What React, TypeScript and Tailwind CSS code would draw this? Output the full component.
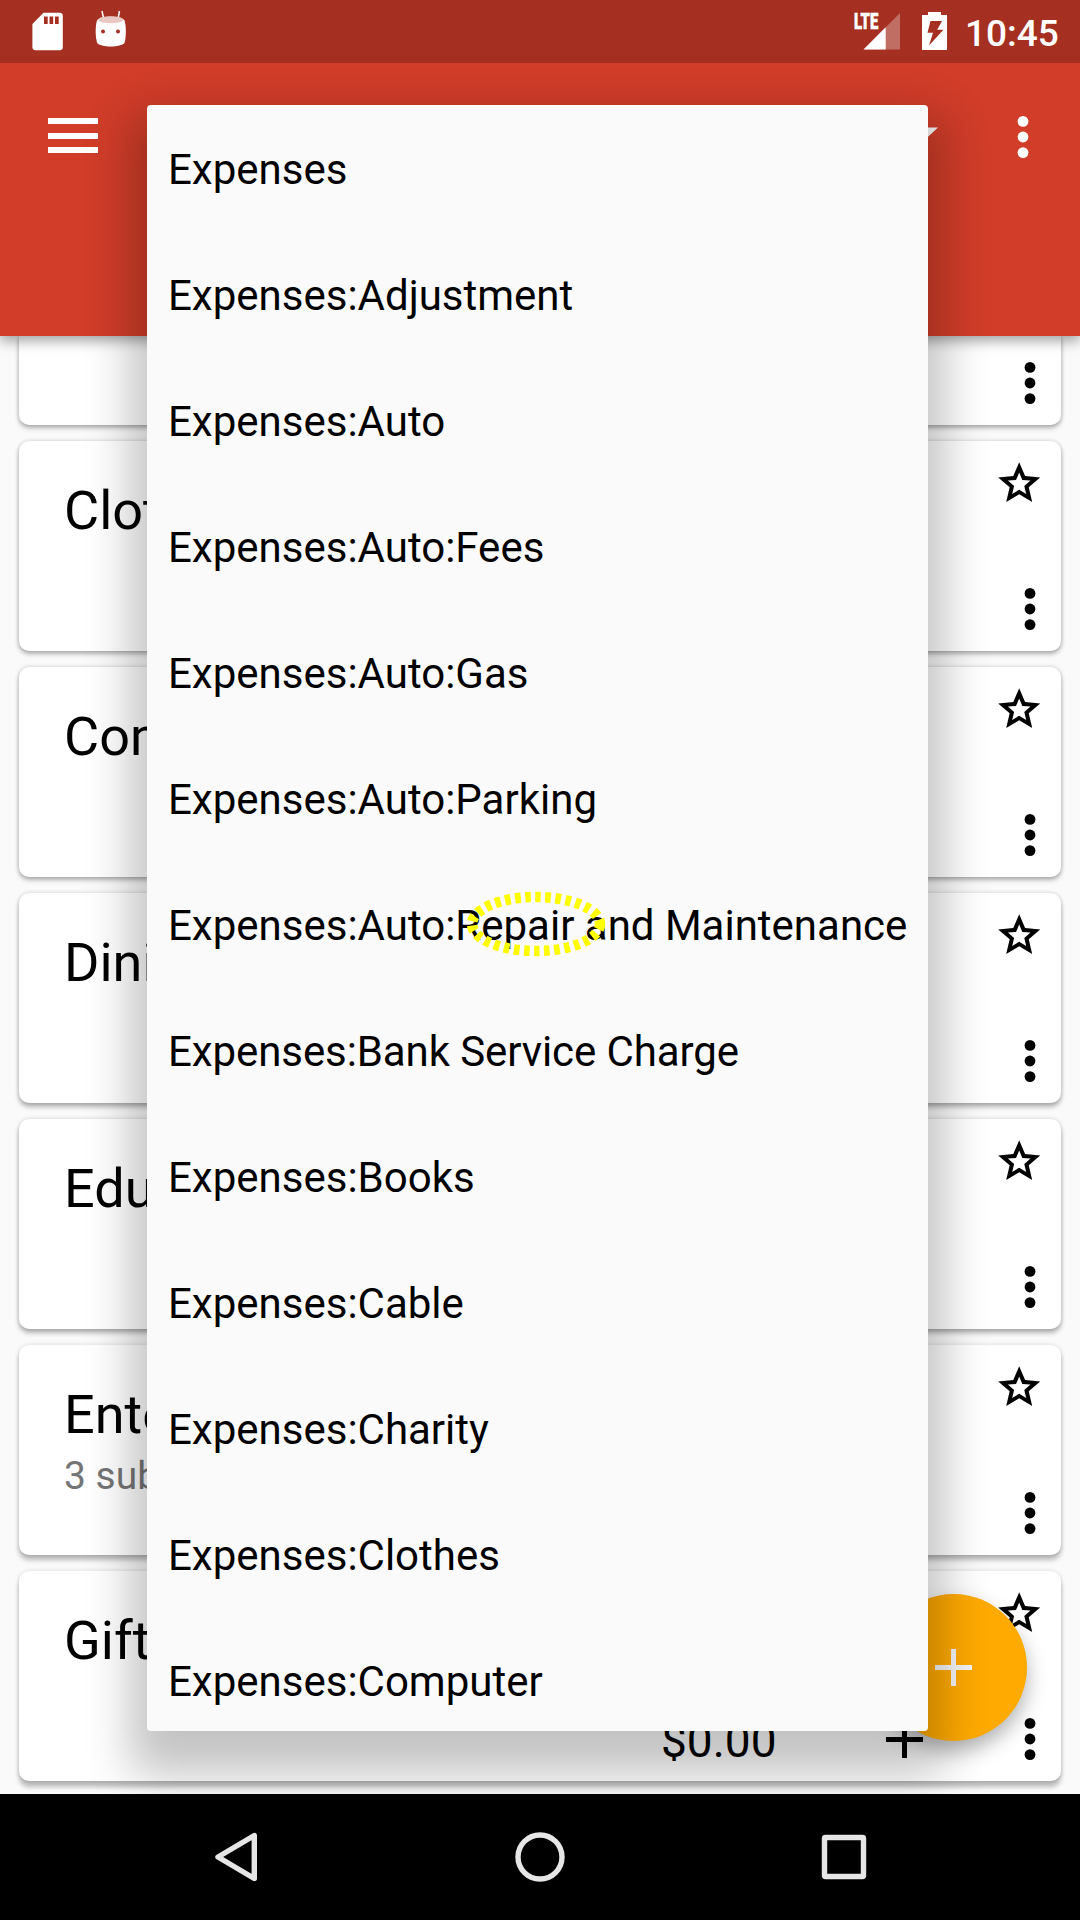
const ACCOUNTS = [
  { name: "Clot", shadow: "shadow-[0_3px_5px_rgba(0,0,0,0.28),0_0_4px_rgba(0,0,0,0.16)]" },
  { name: "Com", shadow: "shadow-[0_3px_5px_rgba(0,0,0,0.28),0_0_4px_rgba(0,0,0,0.16)]" },
  { name: "Dini", shadow: "shadow-[0_4px_5px_rgba(0,0,0,0.28),0_0_4px_rgba(0,0,0,0.16)]" },
  { name: "Edu", shadow: "shadow-[0_4px_5px_rgba(0,0,0,0.28),0_0_4px_rgba(0,0,0,0.16)]" },
  { name: "Ente", note: "3 sub", shadow: "shadow-[0_5px_5px_rgba(0,0,0,0.26),0_0_4px_rgba(0,0,0,0.14)]" },
  { name: "Gift", balance: "$0.00", shadow: "shadow-[0_6px_5px_rgba(0,0,0,0.26),0_0_4px_rgba(0,0,0,0.14)]" },
];

const OPTIONS = [
  "Expenses",
  "Expenses:Adjustment",
  "Expenses:Auto",
  "Expenses:Auto:Fees",
  "Expenses:Auto:Gas",
  "Expenses:Auto:Parking",
  "Expenses:Auto:Repair and Maintenance",
  "Expenses:Bank Service Charge",
  "Expenses:Books",
  "Expenses:Cable",
  "Expenses:Charity",
  "Expenses:Clothes",
  "Expenses:Computer",
];

function Dots({ className }: { className: string }) {
  return (
    <svg className={className} width="12" height="44" viewBox="0 0 12 44" fill="currentColor">
      <circle cx="6" cy="6.400" r="5.400" />
      <circle cx="6" cy="22" r="5.400" />
      <circle cx="6" cy="37.600" r="5.400" />
    </svg>
  );
}

function Plus({ className }: { className: string }) {
  return (
    <svg className={className} width="37" height="37" viewBox="0 0 37 37" fill="currentColor">
      <path d="M16 0h5v16h16v5H21v16h-5V21H0v-5h16z" />
    </svg>
  );
}

function Star() {
  return (
    <svg width="50.400" height="50.400" viewBox="0 0 24 24" fill="#000">
      <path
        fillRule="evenodd"
        d="M22 9.24l-7.190-.620L12 2 9.190 8.630 2 9.240l5.460 4.730L5.820 21 12 17.270 18.180 21l-1.630-7.030zM12 15.100l-3.330 2 .9-3.780-2.950-2.560 3.880-.33L12 6.900l1.500 3.530 3.880.33-2.950 2.560.9 3.780z"
      />
    </svg>
  );
}

function StatusBar() {
  return (
    <header className="flex h-[63px] shrink-0 items-start bg-[#a53021] text-white">
      <svg className="ml-8 mt-3" width="32" height="39" viewBox="0 0 32 39">
        <path fill="#fff" d="M11.500.7H27.500a3.300 3.300 0 0 1 3.300 3.300V35a3.300 3.300 0 0 1-3.300 3.300H3.700A3.300 3.300 0 0 1 .4 35V12z" />
        <path fill="#a53021" d="M12 4.500h3.700V12H12zM17.500 4.500h3.700V12h-3.700zM23 4.500h3.700V12H23z" />
      </svg>
      <svg className="ml-[31px] mt-[10px]" width="32" height="38" viewBox="0 0 32 38">
        <path stroke="#fff" strokeWidth="1.500" d="M7 1l1.700 8M24.500 1L23 9" />
        <path fill="#fff" d="M2 10.500C.2 16 .2 27 2.200 33c3 4.600 24 4.600 27.300 0 1.800-6 1.800-17 0-22.500C26 5.500 5.500 5.500 2 10.500z" />
        <ellipse cx="15.700" cy="9.800" rx="12.700" ry="3.500" fill="#e9c8c4" />
        <circle cx="8" cy="21.500" r="2" fill="#a53021" />
        <circle cx="23" cy="21.500" r="2" fill="#a53021" />
      </svg>
      <div className="ml-auto flex">
        <div className="relative h-12 w-[70px]">
          <svg className="absolute left-[11px] top-3" width="37" height="38" viewBox="0 0 37 38">
            <path fill="#c06e63" d="M37 1v36.500H.5z" />
            <path fill="#fff" d="M22.700 15.300v22.200H.5z" />
          </svg>
          <span className="absolute left-[2px] top-[10px] origin-left scale-x-[0.66] text-[22.500px] font-black leading-[22px] [-webkit-text-stroke:0.6px_white]">LTE</span>
        </div>
        <svg className="mt-3" width="25" height="38" viewBox="0 0 25 38">
          <path fill="#fff" d="M6 0h13v3h6v35H0V3h6z" />
          <path fill="#a53021" d="M8.500 9H20l-4.800 8.700h6.300L7 33.500l4-12.700H5.500z" />
        </svg>
        <span className="ml-[18px] w-[115px] pt-[10px] text-[37px] font-medium leading-[48px]">10:45</span>
      </div>
    </header>
  );
}

function Toolbar() {
  return (
    <div className="relative z-10 flex h-[273px] shrink-0 items-start bg-[#d13d29] text-white shadow-[0_5px_12px_rgba(0,0,0,0.36)]">
      <div className="ml-12 mt-[55px] flex w-[50px] flex-col gap-[8.500px]">
        <div className="h-[6px] bg-white" />
        <div className="h-[6px] bg-white" />
        <div className="h-[6px] bg-white" />
      </div>
      <svg className="ml-auto mt-[64px]" width="30" height="15" viewBox="0 0 30 15">
        <path fill="#fafafa" d="M0 .5h30l-15 14z" />
      </svg>
      <Dots className="ml-[78.500px] mr-[51.500px] mt-[51.500px]" />
    </div>
  );
}

function NavBar() {
  return (
    <nav className="relative z-40 flex h-[126px] shrink-0 items-center bg-black">
      <svg width="1080" height="126" viewBox="0 0 1080 126" fill="none" stroke="#e6e6e6" strokeWidth="5.400" strokeLinejoin="round">
        <path d="M254.300 41.500v43L218 63z" />
        <circle cx="540" cy="63" r="22" />
        <rect x="824.500" y="43.500" width="39" height="39" rx="1" />
      </svg>
    </nav>
  );
}

export default function App() {
  return (
    <div className="relative flex h-[1920px] w-[1080px] flex-col overflow-hidden bg-[#fafafa] font-['Roboto',sans-serif] text-black">
      <StatusBar />
      <div className="relative flex h-[1731px] flex-col overflow-hidden">
        <Toolbar />
        <main className="flex flex-col gap-4 px-[19px]">
          <section className="flex h-[89px] justify-end rounded-b-[10px] bg-white pr-[25px] pt-[25px] shadow-[0_3px_5px_rgba(0,0,0,0.28),0_0_4px_rgba(0,0,0,0.16)]">
            <Dots className="text-black" />
          </section>
          {ACCOUNTS.map((a) => (
            <section key={a.name} className={"flex h-[210px] rounded-[10px] bg-white " + a.shadow}>
              <div className="ml-[45px] mt-[38px] flex w-[120px] flex-col whitespace-nowrap">
                <h2 className="text-[54px] leading-[64px]">{a.name}</h2>
                {a.note && <p className="mt-[6px] text-[39px] leading-[46px] text-[#757575]">{a.note}</p>}
              </div>
              {a.balance && (
                <div className="ml-[477px] flex items-start">
                  <span className="mt-[140px] w-[224.500px] text-[46px] leading-[60px]">{a.balance}</span>
                  <Plus className="mt-[149.500px]" />
                </div>
              )}
              <div className="ml-auto flex flex-col items-end">
                <div className="mr-[16.500px] mt-[17px] h-[50px]">
                  <Star />
                </div>
                <Dots className="mr-[25px] mt-[79px] text-black" />
              </div>
            </section>
          ))}
        </main>
        <button className="absolute left-[880px] top-[1531px] z-20 flex size-[147px] items-center justify-center rounded-full bg-[#ffaa00] text-[#f5f5f5] shadow-[0_10px_20px_rgba(0,0,0,0.3)]">
          <Plus className="" />
        </button>
        <ul className="absolute left-[147px] top-[42px] z-30 flex h-[1626px] w-[781px] flex-col rounded bg-[#fafafa] shadow-[0_26px_46px_17px_rgba(0,0,0,0.24)]">
          {OPTIONS.map((o) => (
            <li key={o} className="flex h-[126px] shrink-0 items-center whitespace-nowrap pl-[21px] pt-[3px] text-[42px] leading-[50px] last:h-[114px] last:pt-[15px] nth-8:tracking-[-0.09px]">
              {o}
            </li>
          ))}
        </ul>
        <svg className="absolute left-[463px] top-[825px] z-40" width="146" height="72" viewBox="0 0 146 72" fill="none">
          <ellipse cx="73" cy="36" rx="64" ry="27" stroke="#ffff00" strokeWidth="10.500" strokeDasharray="5.600 4.500" />
        </svg>
      </div>
      <NavBar />
    </div>
  );
}
